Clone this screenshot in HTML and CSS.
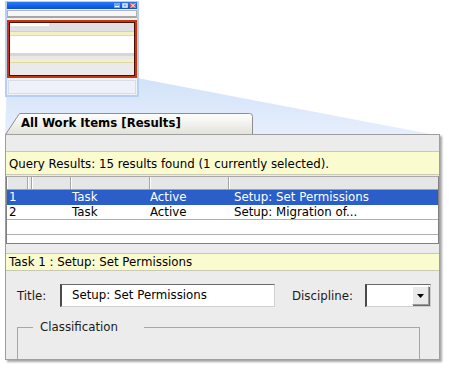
FILE: index.html
```html
<!DOCTYPE html>
<html lang="en">
<head>
  <meta charset="UTF-8" />
  <meta name="viewport" content="width=device-width, initial-scale=1" />
  <title>All Work Items [Results]</title>
  <link rel="stylesheet" href="styles.css">
</head>
<body>

<div class="stage">
  <!-- zoom beam from the thumbnail to the big panel -->
  <svg class="beam" width="449" height="368">
    <defs>
      <linearGradient id="beamFill" x1="0" y1="0" x2="0" y2="1">
        <stop offset="0" stop-color="#d2e2f9"/>
        <stop offset="1" stop-color="#e7effc"/>
      </linearGradient>
    </defs>
    <polygon points="7,78 137,78 441,136 5,136" fill="url(#beamFill)"/>
  </svg>

  <div class="thumb">
    <div class="thumb-title">
      <span class="tbtn"><svg width="6" height="5"><rect x="1" y="3" width="4" height="1" fill="#fff"/></svg></span>
      <span class="tbtn"><svg width="6" height="5"><rect x="1" y="1" width="4" height="3" fill="none" stroke="#fff" stroke-width="1"/></svg></span>
      <span class="tbtn close"><svg width="6" height="5"><path d="M1 0.5 L5 4.5 M5 0.5 L1 4.5" stroke="#fff" stroke-width="1"/></svg></span>
    </div>
    <div class="thumb-bar"></div>
    <div class="thumb-focus">
      <div class="tf-head"><span class="tf-tab"></span></div>
      <div class="tf-yellow"></div>
      <div class="tf-list"></div>
      <div class="tf-gap"></div>
      <div class="tf-yellow"></div>
      <div class="tf-form"></div>
    </div>
    <div class="thumb-foot"></div>
  </div>

  <div class="tab">
    <svg class="tab-shape" width="249" height="23">
      <defs>
        <linearGradient id="tabFill" x1="0" y1="0" x2="0" y2="1">
          <stop offset="0" stop-color="#ffffff"/>
          <stop offset="1" stop-color="#e2e2da"/>
        </linearGradient>
      </defs>
      <path d="M0.5 22.5 L14.5 1.5 L244.5 1.5 Q247.5 1.5 247.5 4.5 L247.5 22.5" fill="url(#tabFill)" stroke="#8e8e8e"/>
    </svg>
    <span class="tab-label">All Work Items [Results]</span>
  </div>

  <div class="panel">
    <div class="band query">Query Results: 15 results found (1 currently selected).</div>

    <div class="grid">
      <div class="grid-head">
        <span></span><span></span><span></span><span></span><span></span><span></span>
      </div>
      <div class="grid-row selected">
        <span class="c1">1</span><span></span><span></span><span class="c4">Task</span><span class="c5">Active</span><span class="c6">Setup: Set Permissions</span>
      </div>
      <div class="grid-row">
        <span class="c1">2</span><span></span><span></span><span class="c4">Task</span><span class="c5">Active</span><span class="c6">Setup: Migration of...</span>
      </div>
      <div class="grid-row">
        <span></span><span></span><span></span><span></span><span></span><span></span>
      </div>
      <div class="grid-fill"></div>
    </div>

    <div class="band task">Task 1 : Setup: Set Permissions</div>

    <div class="form-row">
      <label class="lbl title-lbl">Title:</label>
      <div class="field title-field">Setup: Set Permissions</div>
      <label class="lbl disc-lbl">Discipline:</label>
      <div class="field combo">
        <span class="combo-btn"><svg width="7" height="4"><path d="M0 0 L7 0 L3.5 4 Z" fill="#000"/></svg></span>
      </div>
    </div>

    <fieldset class="group">
      <legend>Classification</legend>
    </fieldset>
  </div>
</div>

</body>
</html>
```

FILE: styles.css
```css
body {
  margin: 0;
  background: #fff;
  font-family: "DejaVu Sans", Verdana, sans-serif;
  font-size: 11.8px;
  color: #000;
}
.stage {
  position: relative;
  width: 449px;
  height: 368px;
  overflow: hidden;
}
.beam {
  position: absolute;
  left: 0;
  top: 0;
}

/* thumbnail window */
.thumb {
  position: relative;
  box-sizing: border-box;
  width: 134px;
  height: 96px;
  margin: 1px 0 0 5px;
  border: 2px solid #b7cff2;
  border-top-width: 1px;
  background: #eef2f9;
}
.thumb-title {
  height: 7px;
  background: linear-gradient(#2a78f2, #0452d6);
  display: flex;
  justify-content: flex-end;
  align-items: center;
  gap: 2px;
  padding-right: 1px;
}
.tbtn {
  width: 6px;
  height: 5px;
  background: #6fa6f2;
  display: flex;
}
.tbtn.close {
  background: #e4572e;
}
.thumb-bar {
  box-sizing: border-box;
  height: 8px;
  margin-top: 1px;
  border: 1px solid #b4b4b4;
  border-bottom: 2px solid #a6a6a6;
  background: #f6f6f6;
}
.thumb-focus {
  box-sizing: border-box;
  height: 58px;
  margin-top: 2px;
  border: 2px solid #c8340e;
  box-shadow: inset 0 0 0 1px #4a1000;
  padding: 1px;
  background: #eaeaec;
}
.tf-head {
  height: 8px;
  background: #e0e0e4;
  border-bottom: 1px solid #d0d0d4;
}
.tf-tab {
  display: block;
  width: 39px;
  height: 3px;
  background: #fff;
}
.tf-yellow {
  height: 3px;
  background: #f3f0c2;
  border-bottom: 1px solid #ddd9a8;
}
.tf-list {
  height: 17px;
  background: #fff;
}
.tf-gap {
  height: 6px;
  background: linear-gradient(#d6d6da 50%, #e8e8ea 50%);
}
.tf-form {
  height: 11px;
}
.thumb-foot {
  box-sizing: border-box;
  height: 14px;
  margin: 2px 1px 0;
  border: 1px solid #d6dde8;
  background: #eef1f7;
}

/* tab */
.tab {
  position: relative;
  width: 249px;
  height: 23px;
  margin: 15px 0 0 5px;
}
.tab-shape {
  position: absolute;
  left: 0;
  top: 0;
}
.tab-label {
  position: relative;
  display: block;
  padding: 3px 0 0 16px;
  font-weight: bold;
  font-size: 11.7px;
  line-height: 16px;
}

/* main panel */
.panel {
  position: relative;
  box-sizing: border-box;
  width: 435px;
  height: 226px;
  margin: -1px 0 0 5px;
  border: 1px solid #9e9e9e;
  background: #ececec;
  box-shadow: 2px 2px 2px rgba(0, 0, 0, 0.35);
  overflow: hidden;
}
.band {
  box-sizing: border-box;
  background: #fbfbd0;
  border-top: 1px solid #c9c9b4;
  border-bottom: 1px solid #c9c9b4;
  padding-left: 3px;
}
.band.query {
  margin-top: 16px;
  height: 24px;
  padding-top: 2px;
  line-height: 20px;
}
.band.task {
  margin-top: 9px;
  height: 18px;
  line-height: 16px;
}

.grid {
  margin-top: 1px;
  border: 1px solid #808080;
  border-top-color: #a8a8a8;
  background: #fff;
}
.grid-head,
.grid-row {
  display: grid;
  grid-template-columns: 21px 4px 39px 79px 79px 1fr;
}
.grid-head {
  height: 12px;
  background: #e6e6e6;
  border-bottom: 1px solid #a0a0a0;
}
.grid-head span {
  border-right: 1px solid #a4a4a4;
  box-shadow: inset 1px 0 0 #fff;
}
.grid-head span:last-child {
  border-right: none;
}
.grid-row {
  height: 14px;
  line-height: 14px;
  border-bottom: 1px solid #b0b0b0;
  white-space: nowrap;
}
.grid-row.selected {
  background: #2b5ec8;
  border-bottom-color: #2b5ec8;
  color: #fff;
}
.c1 { padding-left: 2px; }
.c4 { padding-left: 1px; }
.c6 { padding-left: 5px; }
.grid-fill {
  height: 8px;
}

.form-row {
  display: flex;
  align-items: center;
  height: 23px;
  margin-top: 13px;
  padding-left: 11px;
  color: #1a1a1a;
}
.lbl {
  white-space: nowrap;
}
.title-lbl {
  width: 43px;
}
.disc-lbl {
  width: 73px;
  margin-left: 17px;
}
.field {
  box-sizing: border-box;
  height: 23px;
  background: #fff;
  border-top: 1px solid #6a6a6a;
  border-left: 2px solid #4a4a4a;
  border-right: 1px solid #cfcfcf;
  border-bottom: 1px solid #cfcfcf;
}
.title-field {
  width: 215px;
  padding-left: 10px;
  line-height: 20px;
  color: #000;
}
.combo {
  width: 66px;
  display: flex;
  justify-content: flex-end;
  padding: 1px;
}
.combo-btn {
  box-sizing: border-box;
  width: 17px;
  height: 19px;
  background: #eaeaea;
  border: 1px solid #9a9a9a;
  border-top-color: #fff;
  border-left-color: #fff;
  box-shadow: 1px 1px 0 #6a6a6a;
  display: flex;
  align-items: center;
  justify-content: center;
}

.group {
  box-sizing: border-box;
  height: 40px;
  margin: 13px 19px 0 11px;
  padding: 0 0 0 15px;
  border: 1px solid #a6a6a6;
  border-bottom: none;
}
.group legend {
  padding: 0 26px 0 7px;
  line-height: 14px;
  color: #1a1a1a;
}
```
